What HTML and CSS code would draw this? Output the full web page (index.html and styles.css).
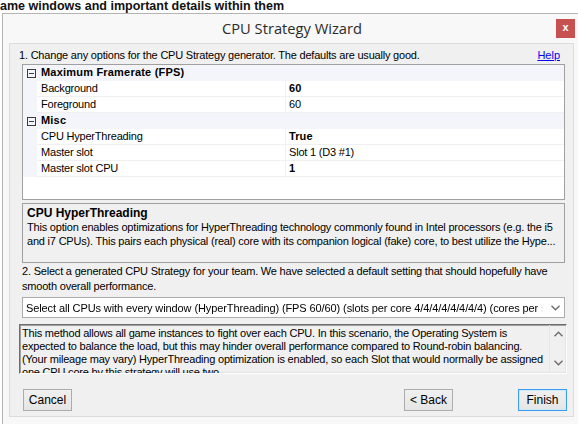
FILE: index.html
```html
<!DOCTYPE html>
<html>
<head>
<meta charset="utf-8">
<link rel="stylesheet" href="styles.css">
</head>
<body>
<div class="top-text">ame windows and important details within them</div>
<div class="window">
  <div class="titlebar">
    <span></span>
    <div class="title">CPU Strategy Wizard</div>
    <div class="close">x</div>
  </div>
  <div class="client">
    <div class="step1"><span>1. Change any options for the CPU Strategy generator. The defaults are usually good.</span><a class="help">Help</a></div>
    <div class="pgrid">
      <div class="cat"><span class="gutter"><span class="minus"></span></span><span class="cat-name">Maximum Framerate (FPS)</span></div>
      <div class="prop"><span class="gutter"></span><span class="name">Background</span><span class="val b">60</span></div>
      <div class="prop"><span class="gutter"></span><span class="name">Foreground</span><span class="val">60</span></div>
      <div class="cat"><span class="gutter"><span class="minus"></span></span><span class="cat-name">Misc</span></div>
      <div class="prop"><span class="gutter"></span><span class="name">CPU HyperThreading</span><span class="val b">True</span></div>
      <div class="prop"><span class="gutter"></span><span class="name">Master slot</span><span class="val">Slot 1 (D3 #1)</span></div>
      <div class="prop"><span class="gutter"></span><span class="name">Master slot CPU</span><span class="val b">1</span></div>
    </div>
    <div class="desc">
      <div class="desc-title">CPU HyperThreading</div>
      <div class="desc-text">This option enables optimizations for HyperThreading technology commonly found in Intel processors (e.g. the i5</div>
      <div class="desc-text">and i7 CPUs). This pairs each physical (real) core with its companion logical (fake) core, to best utilize the Hype...</div>
    </div>
    <div class="step2">2. Select a generated CPU Strategy for your team. We have selected a default setting that should hopefully have<br>smooth overall performance.</div>
    <div class="combo">
      <span class="combo-text">Select all CPUs with every window (HyperThreading) (FPS 60/60) (slots per core 4/4/4/4/4/4/4/4) (cores per slot 1/1/1/1/1/1/1/1)</span>
      <svg class="combo-arrow" width="9" height="6" viewBox="0 0 9 6"><polyline points="0.5,0.8 4.5,4.8 8.5,0.8" fill="none" stroke="#6d6d6d" stroke-width="1.4"/></svg>
    </div>
    <div class="memo">
      <div class="memo-text">This method allows all game instances to fight over each CPU. In this scenario, the Operating System is<br>expected to balance the load, but this may hinder overall performance compared to Round-robin balancing.<br>(Your mileage may vary) HyperThreading optimization is enabled, so each Slot that would normally be assigned<br>one CPU core by this strategy will use two.</div>
      <div class="scroll">
        <svg width="9" height="6" viewBox="0 0 9 6"><polyline points="0.5,5.2 4.5,1.2 8.5,5.2" fill="none" stroke="#6d6d6d" stroke-width="1.4"/></svg>
        <svg width="9" height="6" viewBox="0 0 9 6"><polyline points="0.5,0.8 4.5,4.8 8.5,0.8" fill="none" stroke="#6d6d6d" stroke-width="1.4"/></svg>
      </div>
    </div>
    <div class="buttons">
      <div class="btn">Cancel</div>
      <div class="spacer"></div>
      <div class="btn">&lt; Back</div>
      <div class="btn default">Finish</div>
    </div>
  </div>
</div>
</body>
</html>
```

FILE: styles.css
```css
html, body {
  margin: 0;
  padding: 0;
}
body {
  background: #fff;
  width: 578px;
  height: 424px;
  overflow: hidden;
  font-family: "Liberation Sans", Arial, sans-serif;
  color: #000;
}
.top-text {
  font-weight: bold;
  font-size: 12.5px;
  line-height: 13px;
  height: 13px;
  color: #111;
  white-space: nowrap;
  overflow: hidden;
}
.window {
  margin-left: 2px;
  width: 580px;
  height: 420px;
  box-sizing: border-box;
  border: 1px solid #b4b4b4;
  background: #f8f8f8;
}
.titlebar {
  display: grid;
  grid-template-columns: 1fr auto 1fr;
  height: 29px;
}
.title {
  font-family: "Open Sans", "Noto Sans", sans-serif;
  font-size: 14.7px;
  line-height: 29px;
  color: #2b2b2b;
}
.close {
  justify-self: end;
  margin: 5px 6px 0 0;
  width: 19px;
  height: 19px;
  background: #c75050;
  color: #fff;
  font-weight: bold;
  font-size: 11px;
  line-height: 17px;
  text-align: center;
}
.client {
  margin-left: 6px;
  width: 565px;
  height: 374px;
  box-sizing: border-box;
  border: 1px solid #dcdcdc;
  background: #f0f0f0;
  display: flex;
  flex-direction: column;
  font-size: 11px;
  letter-spacing: -0.2px;
}
.step1 {
  display: flex;
  justify-content: space-between;
  padding: 5px 13px 0 9px;
  line-height: 13px;
  height: 13px;
  white-space: nowrap;
}
.help {
  color: #0000ee;
  text-decoration: underline;
  letter-spacing: 0;
}
.pgrid {
  margin: 2px 0 0 12px;
  width: 543px;
  height: 136px;
  box-sizing: border-box;
  border: 1px solid #a0a0a0;
  background: #fff;
}
.cat, .prop {
  display: flex;
  height: 16px;
  line-height: 15px;
  box-sizing: border-box;
}
.cat {
  background: #f3f5fa;
  font-weight: bold;
  letter-spacing: 0.2px;
}
.gutter {
  width: 14px;
  flex: none;
  background: #f3f5fa;
  display: flex;
  align-items: center;
  justify-content: center;
}
.minus {
  width: 9px;
  height: 9px;
  box-sizing: border-box;
  border: 1px solid #3c3c3c;
  margin-left: 3px;
  background: linear-gradient(#3c3c3c, #3c3c3c) center / 5px 1px no-repeat;
}
.cat-name {
  padding-left: 4px;
}
.prop .name {
  width: 249px;
  flex: none;
  box-sizing: border-box;
  padding-left: 4px;
  border-bottom: 1px solid #f0f0f0;
  border-right: 1px solid #f0f0f0;
}
.prop .val {
  flex: 1;
  padding-left: 3px;
  border-bottom: 1px solid #f0f0f0;
}
.b {
  font-weight: bold;
  letter-spacing: 0.1px;
}
.desc {
  margin: 3px 0 0 12px;
  width: 543px;
  height: 60px;
  box-sizing: border-box;
  border: 1px solid #a0a0a0;
  padding: 2px 0 0 4px;
  line-height: 14px;
  white-space: nowrap;
  overflow: hidden;
}
.desc-title {
  font-weight: bold;
  font-size: 12px;
  letter-spacing: 0;
}
.step2 {
  margin: 1px 0 0 12px;
  line-height: 15px;
  white-space: nowrap;
}
.combo {
  margin: 3px 0 0 12px;
  width: 543px;
  height: 21px;
  box-sizing: border-box;
  border: 1px solid #acacac;
  background: #fff;
  display: flex;
  align-items: center;
  padding: 0 4px 0 3px;
}
.combo-text {
  flex: 1;
  overflow: hidden;
  white-space: nowrap;
  letter-spacing: -0.1px;
  -webkit-mask-image: linear-gradient(to right, #000 calc(100% - 6px), transparent);
  mask-image: linear-gradient(to right, #000 calc(100% - 6px), transparent);
  margin-right: 8px;
}
.memo {
  margin: 6px 0 0 9px;
  width: 548px;
  height: 50px;
  box-sizing: border-box;
  border-top: 1px solid #6e6e6e;
  border-left: 1px solid #6e6e6e;
  border-right: 1px solid #fff;
  border-bottom: 1px solid #fff;
  box-shadow: inset 1px 1px 0 #a0a0a0, inset -1px -1px 0 #e3e3e3;
  display: flex;
  overflow: hidden;
}
.memo-text {
  flex: 1;
  padding: 2px 0 0 2px;
  line-height: 13px;
  white-space: nowrap;
  overflow: hidden;
}
.scroll {
  width: 16px;
  flex: none;
  border-left: 1px solid #e6e6e6;
  display: flex;
  flex-direction: column;
  justify-content: space-between;
  align-items: center;
  padding: 6px 0 6px;
  margin-bottom: 1px;
}
.buttons {
  margin: 15px 0 0 13px;
  display: flex;
  width: 544px;
}
.spacer {
  flex: 1;
}
.btn {
  width: 49px;
  height: 22px;
  box-sizing: border-box;
  border: 1px solid #acacac;
  background: linear-gradient(#f0f0f0, #e5e5e5);
  text-align: center;
  line-height: 20px;
  font-size: 12px;
  letter-spacing: 0;
}
.btn + .btn {
  margin-left: 65px;
}
.btn.default {
  border-color: #3c9cf0;
  box-shadow: inset 0 0 0 1px #d0e8fc;
}
```
